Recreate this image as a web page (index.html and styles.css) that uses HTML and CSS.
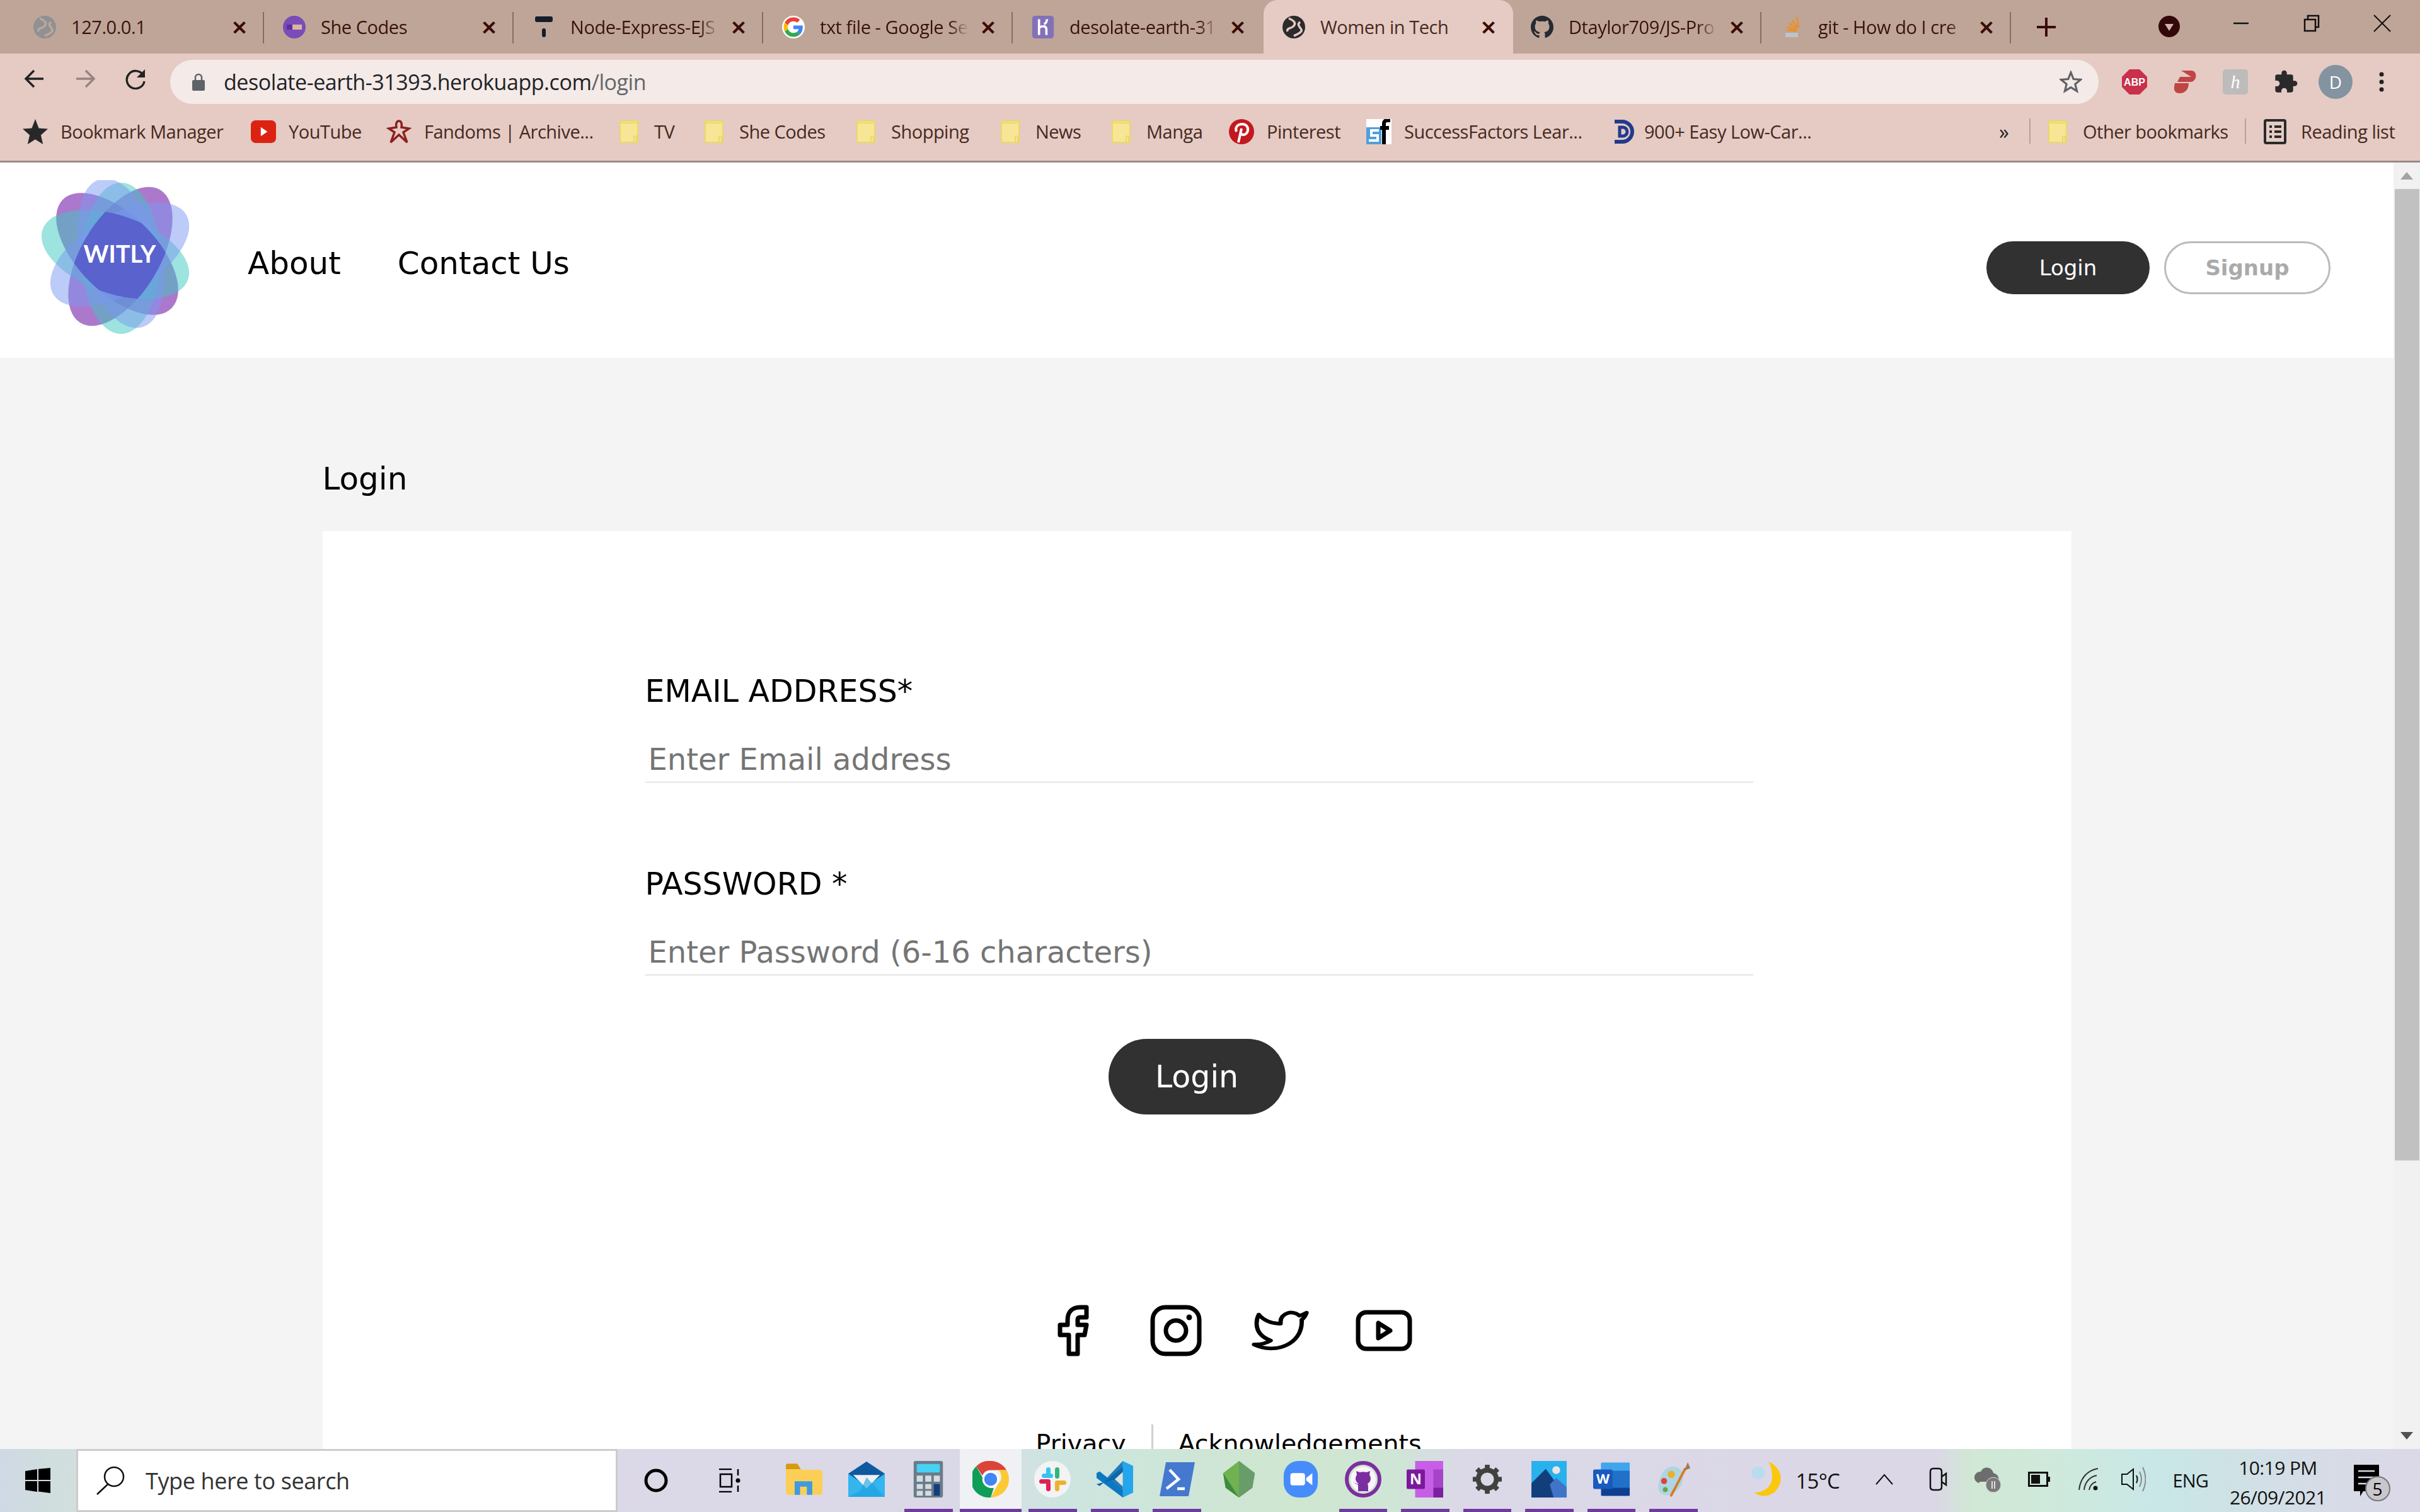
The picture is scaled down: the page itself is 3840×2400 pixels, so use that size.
FILE: index.html
```html
<!DOCTYPE html>
<html lang="en">
<head>
<meta charset="utf-8">
<title>Women in Tech</title>
<link rel="stylesheet" href="styles.css">
</head>
<body>
<div class="browser">
  <div class="tabstrip">
    <div class="tab">
      <svg class="fav" viewBox="0 0 36 36"><circle cx="18" cy="18" r="18" fill="#8f9192"/><path d="M10 4c8 4 12 7 8 12s-12 3-10 9M28 10c-6 4 0 8 2 12s-8 8-12 10" fill="none" stroke="#c0a699" stroke-width="3.5"/></svg>
      <span class="tab-title">127.0.0.1</span><span class="tab-x">✕</span>
    </div>
    <div class="tab">
      <svg class="fav" viewBox="0 0 36 36"><circle cx="18" cy="18" r="18" fill="#7a4cb8"/><rect x="6" y="14" width="24" height="8" fill="#d9b4a0"/><rect x="6" y="14" width="9" height="8" fill="#5b2f96"/></svg>
      <span class="tab-title">She Codes</span><span class="tab-x">✕</span>
    </div>
    <div class="tab">
      <svg class="fav" viewBox="0 0 36 36"><rect x="4" y="1" width="28" height="9" rx="3" fill="#141d2b"/><rect x="15" y="20" width="6" height="14" rx="3" fill="#141d2b"/></svg>
      <span class="tab-title fade">Node-Express-EJS</span><span class="tab-x">✕</span>
    </div>
    <div class="tab">
      <svg class="fav" viewBox="-4 -4 56 56"><circle cx="24" cy="24" r="28" fill="#fff"/><path fill="#EA4335" d="M24 9.5c3.54 0 6.71 1.22 9.21 3.6l6.85-6.85C35.9 2.38 30.47 0 24 0 14.62 0 6.51 5.38 2.56 13.22l7.98 6.19C12.43 13.72 17.74 9.5 24 9.5z"/><path fill="#4285F4" d="M46.98 24.55c0-1.57-.15-3.09-.38-4.55H24v9.02h12.94c-.58 2.96-2.26 5.48-4.78 7.18l7.73 6c4.51-4.18 7.09-10.36 7.09-17.65z"/><path fill="#FBBC05" d="M10.53 28.59c-.48-1.45-.76-2.99-.76-4.59s.27-3.14.76-4.59l-7.98-6.19C.92 16.46 0 20.12 0 24c0 3.88.92 7.54 2.56 10.78l7.97-6.19z"/><path fill="#34A853" d="M24 48c6.48 0 11.93-2.13 15.89-5.81l-7.73-6c-2.15 1.45-4.92 2.3-8.16 2.3-6.26 0-11.57-4.22-13.47-9.91l-7.98 6.19C6.51 42.62 14.62 48 24 48z"/></svg>
      <span class="tab-title fade">txt file - Google Se</span><span class="tab-x">✕</span>
    </div>
    <div class="tab no-sep">
      <svg class="fav" viewBox="0 0 38 40"><rect width="38" height="40" rx="5" fill="#8371b8"/><path d="M12 6v28M12 21c6-4 13-3 13 3v10M26 6c0 4-2 7-5 9" fill="none" stroke="#fff" stroke-width="4"/></svg>
      <span class="tab-title fade">desolate-earth-31</span><span class="tab-x">✕</span>
    </div>
    <div class="tab active">
      <svg class="fav" viewBox="0 0 36 36"><circle cx="18" cy="18" r="18" fill="#2b2b2b"/><path d="M10 4c8 4 12 7 8 12s-12 3-10 9M28 10c-6 4 0 8 2 12s-8 8-12 10" fill="none" stroke="#e5cbc4" stroke-width="3.5"/></svg>
      <span class="tab-title">Women in Tech</span><span class="tab-x">✕</span>
    </div>
    <div class="tab">
      <svg class="fav" viewBox="0 0 16 16"><path fill="#262b33" d="M8 0C3.58 0 0 3.58 0 8c0 3.54 2.29 6.53 5.47 7.59.4.07.55-.17.55-.38 0-.19-.01-.82-.01-1.49-2.01.37-2.53-.49-2.69-.94-.09-.23-.48-.94-.82-1.13-.28-.15-.68-.52-.01-.53.63-.01 1.08.58 1.23.82.72 1.21 1.87.87 2.33.66.07-.52.28-.87.51-1.07-1.78-.2-3.64-.89-3.64-3.95 0-.87.31-1.59.82-2.15-.08-.2-.36-1.02.08-2.12 0 0 .67-.21 2.2.82.64-.18 1.32-.27 2-.27.68 0 1.36.09 2 .27 1.53-1.04 2.2-.82 2.2-.82.44 1.1.16 1.92.08 2.12.51.56.82 1.27.82 2.15 0 3.07-1.87 3.75-3.65 3.95.29.25.54.73.54 1.48 0 1.07-.01 1.93-.01 2.2 0 .21.15.46.55.38A8.013 8.013 0 0016 8c0-4.42-3.58-8-8-8z"/></svg>
      <span class="tab-title fade">Dtaylor709/JS-Pro</span><span class="tab-x">✕</span>
    </div>
    <div class="tab">
      <svg class="fav" viewBox="0 0 36 36"><path d="M8 27h20v7H8z" fill="#bfc3c8"/><path d="M10 23l16 1M11 18l14 5M14 12l12 9M19 7l9 13M26 2l3 16" fill="none" stroke="#e8922e" stroke-width="3"/></svg>
      <span class="tab-title fade">git - How do I cre</span><span class="tab-x">✕</span>
    </div>
    <svg class="new-tab" viewBox="0 0 30 30"><path d="M15 0v30M0 15h30" stroke="#3b0a0a" stroke-width="4"/></svg>
    <div class="win-controls">
      <svg class="media" viewBox="0 0 34 34"><circle cx="17" cy="17" r="17" fill="#330808"/><path d="M10 13h14l-7 11z" fill="#cbb5ac"/></svg>
      <svg class="wc" viewBox="0 0 30 30"><path d="M3 15h24" stroke="#111" stroke-width="2.5"/></svg>
      <svg class="wc" viewBox="0 0 30 30"><path d="M4 9h17v18H4zM9 9V3h17v18h-5" fill="none" stroke="#111" stroke-width="2.5"/></svg>
      <svg class="wc" viewBox="0 0 30 30"><path d="M2 2l26 26M28 2L2 28" stroke="#111" stroke-width="2"/></svg>
    </div>
  </div>

  <div class="toolbar">
    <svg class="tool" viewBox="0 0 34 34"><path d="M31 17H4M16 4L3 17l13 13" fill="none" stroke="#222" stroke-width="3.4"/></svg>
    <svg class="tool" viewBox="0 0 34 34"><path d="M3 17h27M18 4l13 13-13 13" fill="none" stroke="#948580" stroke-width="3.4"/></svg>
    <svg class="tool" viewBox="0 0 34 34"><path d="M29 11a14 14 0 1 0 2 10" fill="none" stroke="#222" stroke-width="3.4"/><path d="M32 2v13H19z" fill="#222"/></svg>
    <div class="omnibox">
      <svg class="lock" viewBox="0 0 20 28"><path d="M5 12V7a5 5 0 0 1 10 0v5" fill="none" stroke="#5f6368" stroke-width="2.5"/><rect y="11" width="20" height="17" rx="2" fill="#5f6368"/></svg>
      <span class="url">desolate-earth-31393.herokuapp.com<span class="url-path">/login</span></span>
      <svg class="star" viewBox="0 0 36 36"><path d="M18 3l4.2 10.6 11.3.8-8.700 7.200 2.800 11L18 26.600 8.400 32.600l2.800-11-8.700-7.200 11.300-.8z" fill="none" stroke="#5f6368" stroke-width="3.2"/></svg>
    </div>
    <div class="ext-row">
      <svg class="ext" viewBox="0 0 40 40"><path d="M12 0h16l12 12v16L28 40H12L0 28V12z" fill="#c9304a"/><text x="20" y="26" class="abp">ABP</text></svg>
      <svg class="ext" viewBox="0 0 40 40"><path d="M14 2h16c10 0 10 16 0 18H8l4-8h18M4 22h22c0 10-6 16-14 16-8 0-11-4-8-16z" fill="#c04545"/></svg>
      <svg class="ext" viewBox="0 0 40 40"><rect width="40" height="40" rx="5" fill="#bebcbb"/><text x="20" y="30" class="hon">h</text></svg>
      <svg class="ext" viewBox="0 0 24 24"><path fill="#2a2a2a" d="M20.500 11H19V7a2 2 0 0 0-2-2h-4V3.500a2.500 2.500 0 0 0-5 0V5H4a2 2 0 0 0-2 2v3.800h1.500a2.700 2.700 0 0 1 0 5.400H2V20a2 2 0 0 0 2 2h3.800v-1.500a2.700 2.700 0 0 1 5.400 0V22H17a2 2 0 0 0 2-2v-4h1.500a2.500 2.500 0 0 0 0-5z"/></svg>
      <div class="avatar">D</div>
      <svg class="dots" viewBox="0 0 8 34"><circle cx="4" cy="5" r="3.500" fill="#222"/><circle cx="4" cy="17" r="3.500" fill="#222"/><circle cx="4" cy="29" r="3.500" fill="#222"/></svg>
    </div>
  </div>

  <div class="bookmarks">
    <div class="bm"><svg class="bm-ico" viewBox="0 0 36 36"><path d="M18 0l5 13 13 1-10 9 3 13-11-7-11 7 3-13L0 14l13-1z" fill="#282828"/></svg><span>Bookmark Manager</span></div>
    <div class="bm"><svg class="bm-ico" viewBox="0 0 38 36"><rect y="1" width="38" height="34" rx="7" fill="#dc2312"/><path d="M15 11l10 7-10 7z" fill="#fff"/></svg><span>YouTube</span></div>
    <div class="bm"><svg class="bm-ico" viewBox="0 0 40 40"><path d="M20 3c-4 0-5 5-4 10l-12 2 9 6-6 16 13-12 13 12-6-16 9-6-12-2c1-5 0-10-4-10z" fill="none" stroke="#8e2020" stroke-width="3.500"/></svg><span>Fandoms | Archive...</span></div>
    <div class="bm"><svg class="folder" viewBox="0 0 30 36"><use href="#ic-folder"/></svg><span>TV</span></div>
    <div class="bm"><svg class="folder" viewBox="0 0 30 36"><use href="#ic-folder"/></svg><span>She Codes</span></div>
    <div class="bm"><svg class="folder" viewBox="0 0 30 36"><use href="#ic-folder"/></svg><span>Shopping</span></div>
    <div class="bm"><svg class="folder" viewBox="0 0 30 36"><use href="#ic-folder"/></svg><span>News</span></div>
    <div class="bm"><svg class="folder" viewBox="0 0 30 36"><use href="#ic-folder"/></svg><span>Manga</span></div>
    <div class="bm"><svg class="bm-ico" viewBox="0 0 40 40"><circle cx="20" cy="20" r="20" fill="#c4171f"/><path d="M15 37l5-22M12 20c-3-8 3-12 9-12s10 4 9 10-7 9-11 5" fill="none" stroke="#fff" stroke-width="4"/></svg><span>Pinterest</span></div>
    <div class="bm"><svg class="bm-ico" viewBox="0 0 40 40"><rect width="40" height="40" fill="#fff"/><rect y="13" width="24" height="27" fill="#4f9ede"/><path d="M20 18H8v8h10v8H4" fill="none" stroke="#fff" stroke-width="4"/><path d="M38 2h-5c-3 0-5 2-5 5v33M22 14h14" fill="none" stroke="#000" stroke-width="6"/></svg><span>SuccessFactors Lear...</span></div>
    <div class="bm"><svg class="bm-ico bm-ico-tight" viewBox="0 0 36 40"><path d="M4 4h12a16 16 0 0 1 0 32H4" fill="none" stroke="#233a8c" stroke-width="6"/><path d="M12 13h5a7 7 0 0 1 0 14h-5z" fill="none" stroke="#233a8c" stroke-width="5"/></svg><span>900+ Easy Low-Car...</span></div>
    <span class="more">»</span>
    <div class="bm bm-sep"><svg class="folder" viewBox="0 0 30 36"><use href="#ic-folder"/></svg><span>Other bookmarks</span></div>
    <div class="bm bm-sep"><svg class="read-ico" viewBox="0 0 36 40"><rect x="2" y="2" width="32" height="36" rx="2" fill="none" stroke="#2a2a2a" stroke-width="4"/><path d="M9 12h4M17 12h11M9 20h4M17 20h11M9 28h4M17 28h11" stroke="#2a2a2a" stroke-width="4"/></svg><span>Reading list</span></div>
  </div>
  <svg class="sprite" width="0" height="0"><defs>
    <g id="ic-folder"><rect x="1" y="1" width="28" height="34" fill="#f7e695" stroke="#ecd867" stroke-width="2"/><path d="M1 4h28" stroke="#ecd867" stroke-width="2"/><path d="M23 35v-8a2 2 0 0 1 4 0v8" fill="none" stroke="#ecd867" stroke-width="2"/></g>
  </defs></svg>

  <div class="viewport">
    <div class="site">
      <header class="site-header">
        <a class="logo">
          <svg class="logo-svg" viewBox="66 286 235 246">
            <defs>
              <clipPath id="clip-t1"><ellipse cx="183" cy="404" rx="62" ry="122" transform="rotate(-71 183 404)"/></clipPath>
              <clipPath id="clip-p1"><ellipse cx="186" cy="403" rx="62" ry="122" transform="rotate(-45 186 403)"/></clipPath>
            </defs>
            <g class="petals-purple"><ellipse cx="186" cy="403" rx="62" ry="122" transform="rotate(-45 186 403)"/><ellipse cx="191" cy="407" rx="62" ry="123" transform="rotate(31 191 407)"/></g>
            <g class="petals-teal"><ellipse cx="183" cy="404" rx="62" ry="122" transform="rotate(-71 183 404)"/><ellipse cx="192" cy="410" rx="62" ry="120"/></g>
            <g class="petals-blue"><ellipse cx="192" cy="402" rx="62" ry="122" transform="rotate(-16 192 402)"/><ellipse cx="190" cy="404" rx="62" ry="123" transform="rotate(59 190 404)"/></g>
            <g clip-path="url(#clip-t1)"><g clip-path="url(#clip-p1)"><ellipse class="petal-core" cx="191" cy="407" rx="62" ry="123" transform="rotate(31 191 407)"/></g></g>
            <text x="190" y="417" class="logo-text">WITLY</text>
          </svg>
        </a>
        <nav class="site-nav"><a>About</a><a>Contact Us</a></nav>
        <div class="auth"><a class="pill pill-dark">Login</a><a class="pill pill-outline">Signup</a></div>
      </header>
      <main class="content">
        <h1 class="page-title">Login</h1>
        <section class="card">
          <form class="login-form">
            <label class="field-label">EMAIL ADDRESS*</label>
            <input class="field-input" type="email" placeholder="Enter Email address">
            <label class="field-label second">PASSWORD *</label>
            <input class="field-input" type="password" placeholder="Enter Password (6-16 characters)">
            <button class="submit" type="button">Login</button>
          </form>
          <footer class="card-footer">
            <div class="socials">
              <svg class="s-fb" viewBox="0 0 50 82"><path d="M46 4H36C23 4 16 12 16 24v8H4v16h14v30h14V48h11l3-16H32v-8q0-4 4-4h10z" fill="none" stroke="#000" stroke-width="7" stroke-linejoin="round"/></svg>
              <svg class="s-ig" viewBox="0 0 82 82"><rect x="4" y="4" width="74" height="74" rx="20" fill="none" stroke="#000" stroke-width="7"/><circle cx="41" cy="41" r="16" fill="none" stroke="#000" stroke-width="7"/><circle cx="62" cy="20" r="4.500" fill="#000"/></svg>
              <svg class="s-tw" viewBox="0 0 24 24" preserveAspectRatio="none"><path d="M23 3a10.900 10.900 0 0 1-3 1.530 4.480 4.480 0 0 0-7.860 3v1A10.660 10.660 0 0 1 3 4s-4 9 5 13a11.640 11.640 0 0 1-7 2c9 5 20 0 20-11.500a4.500 4.500 0 0 0-.08-.83A7.720 7.720 0 0 0 23 3z" fill="none" stroke="#000" stroke-width="1.800" stroke-linejoin="round"/></svg>
              <svg class="s-yt" viewBox="0 0 90 66"><rect x="4" y="4" width="82" height="58" rx="13" fill="none" stroke="#000" stroke-width="7"/><path d="M36 21v24l19-12z" fill="none" stroke="#000" stroke-width="7" stroke-linejoin="round"/></svg>
            </div>
            <div class="legal"><a>Privacy</a><a class="legal-last">Acknowledgements</a></div>
          </footer>
        </section>
      </main>
    </div>
    <div class="scrollbar">
      <div class="sb-btn"><span class="tri-up"></span></div>
      <div class="sb-thumb"></div>
      <div class="sb-track"></div>
      <div class="sb-btn"><span class="tri-down"></span></div>
    </div>
  </div>
</div>

<div class="taskbar">
  <svg class="start" viewBox="0 0 40 40"><path d="M0 5l19-3v17H0zM21 1.700L40 0v19H21zM0 21h19v17L0 35zM21 21h19v19l-19-2.500z" fill="#000"/></svg>
  <div class="search">
    <svg class="search-ico" viewBox="0 0 48 48"><circle cx="30" cy="18" r="15" fill="none" stroke="#111" stroke-width="2.500"/><path d="M20 30L3 46" stroke="#111" stroke-width="2.500"/></svg>
    <span>Type here to search</span>
  </div>
  <svg class="cortana" viewBox="0 0 40 40"><circle cx="20" cy="20" r="16" fill="none" stroke="#000" stroke-width="5"/></svg>
  <svg class="taskview" viewBox="0 0 38 38"><path d="M0 1h20M0 37h20M2 9h18v20H2zM0 13" fill="none" stroke="#000" stroke-width="2.500"/><path d="M30 1v10M30 27v10" stroke="#000" stroke-width="2.500"/><circle cx="30" cy="19" r="3.500" fill="#000"/></svg>
  <div class="apps">
    <div class="app"><svg class="app-ico" viewBox="0 0 54 46"><path d="M0 6a4 4 0 0 1 4-4h14l5 7h27a4 4 0 0 1 4 4v29a4 4 0 0 1-4 4H4a4 4 0 0 1-4-4z" fill="#fbcf57"/><path d="M0 3a3 3 0 0 1 3-3h14l5 8H0z" fill="#d69a0e"/><path d="M13 46V26h26v20h-8V34H21v12z" fill="#3f9ae0"/></svg></div>
    <div class="app"><svg class="app-ico" viewBox="0 0 60 58"><path d="M0 20L30 0l30 20v38H0z" fill="#33b5ee"/><path d="M0 20L30 0l30 20-30 20z" fill="#0f5a9f"/><path d="M8 22h44L30 44z" fill="#eef2f4"/><path d="M30 26L60 58H0l20-10z" fill="#1b9fe0" opacity=".6"/></svg></div>
    <div class="app running"><svg class="app-ico" viewBox="0 0 48 60"><rect width="48" height="60" rx="3" fill="#6b7b88"/><rect x="5" y="5" width="38" height="14" rx="2" fill="#46d2f5"/><g fill="#d5dce1"><rect x="5" y="24" width="10" height="10"/><rect x="19" y="24" width="10" height="10"/><rect x="33" y="24" width="10" height="10"/><rect x="5" y="38" width="10" height="8"/><rect x="19" y="38" width="10" height="8"/><rect x="5" y="49" width="10" height="8"/><rect x="19" y="49" width="10" height="8"/></g><rect x="33" y="38" width="10" height="19" fill="#123f7c"/></svg></div>
    <div class="app running current"><svg class="app-ico" viewBox="0 0 48 48"><path d="M24 0a24 24 0 0 1 20.800 12H24a12 12 0 0 0-11 7L5 7A24 24 0 0 1 24 0z" fill="#db4437"/><path d="M44.800 12A24 24 0 0 1 24 48l10-18a12 12 0 0 0 0-18z" fill="#fcc934"/><path d="M5 7l9 16a12 12 0 0 0 14 12.500L24 48A24 24 0 0 1 5 7z" fill="#109d58"/><circle cx="24" cy="24" r="11" fill="#fff"/><circle cx="24" cy="24" r="8.500" fill="#4285f4"/></svg></div>
    <div class="app running"><svg class="app-ico" viewBox="0 0 58 58"><circle cx="29" cy="29" r="29" fill="#f4f3f4"/><rect x="12" y="20" width="18" height="7" rx="3.500" fill="#36c5f0"/><rect x="19" y="10" width="7" height="14" rx="3.500" fill="#36c5f0"/><rect x="33" y="10" width="7" height="18" rx="3.500" fill="#2eb67d"/><rect x="33" y="31" width="18" height="7" rx="3.500" fill="#ecb22e"/><rect x="33" y="33" width="7" height="15" rx="3.500" fill="#ecb22e"/><rect x="8" y="29" width="18" height="7" rx="3.500" fill="#e01e5a"/><rect x="19" y="33" width="7" height="15" rx="3.500" fill="#e01e5a"/></svg></div>
    <div class="app running"><svg class="app-ico" viewBox="0 0 60 60"><path d="M43 0l17 8v44l-17 8z" fill="#23a6ec"/><path d="M43 0v60L13 32z" fill="#0f6fb8" opacity=".9"/><path d="M0 20l5-3 38 31v12L0 28z" fill="#0b79c2"/><path d="M0 38l5 3 38-31V22L32 30z" fill="#0e66aa"/><path d="M30 30L43 18v24z" fill="#dbe4d9"/></svg></div>
    <div class="app running"><svg class="app-ico" viewBox="0 0 58 58"><path d="M12 2h46l-10 54H2z" fill="#4479cf"/><path d="M18 14l14 15-19 15M30 44h12" fill="none" stroke="#fff" stroke-width="4.500"/></svg></div>
    <div class="app"><svg class="app-ico" viewBox="0 0 52 60"><path d="M26 0l26 20-4 24-22 16L4 44 0 20z" fill="#6fb24f"/><path d="M26 0l26 20-4 24-22 16z" fill="#689d6a"/><path d="M0 20l26 40-22-16z" fill="#3f8a3f"/></svg></div>
    <div class="app"><svg class="app-ico" viewBox="0 0 56 60"><rect width="56" height="60" rx="24" fill="#468cfb"/><rect x="11" y="20" width="24" height="20" rx="4" fill="#fff"/><path d="M37 28l10-8v20l-10-8z" fill="#fff"/></svg></div>
    <div class="app running"><svg class="app-ico" viewBox="0 0 58 58"><circle cx="29" cy="29" r="26" fill="none" stroke="#7b2f9e" stroke-width="6"/><circle cx="29" cy="29" r="20" fill="#fbf5fb"/><path d="M21 48V38l-8-4c6 2 8 3 9 2-6-3-6-10-3-14l-1-6 6 2c3-1 7-1 10 0l6-2-1 6c3 4 3 11-3 14 1 2 1 4 1 12z" fill="#7b2f9e"/></svg></div>
    <div class="app running"><svg class="app-ico" viewBox="0 0 60 60"><rect x="14" width="46" height="60" fill="#c75fe6"/><rect x="44" y="14" width="16" height="46" fill="#a644c8"/><rect x="44" y="44" width="16" height="16" fill="#7c1fa0"/><rect y="14" width="30" height="32" rx="2" fill="#7a1a9a"/><text x="15" y="38" class="app-letter">N</text></svg></div>
    <div class="app running"><svg class="app-ico-sm" viewBox="0 0 48 48"><g fill="none" stroke="#3f433f"><circle cx="24" cy="24" r="15" stroke-width="8"/><path d="M24 0v48M0 24h48M7 7l34 34M41 7L7 41" stroke-width="8" stroke-dasharray="8 32 8"/></g></svg></div>
    <div class="app running"><svg class="app-ico" viewBox="0 0 54 56"><rect width="54" height="56" fill="#29b1ec"/><circle cx="38" cy="14" r="6" fill="#e9e6e6"/><path d="M0 56V34L22 12l32 44z" fill="#123f7c"/><path d="M28 36l10-10 16 14v16H34z" fill="#3f74c9"/></svg></div>
    <div class="app running"><svg class="app-ico" viewBox="0 0 64 58"><rect x="14" width="50" height="58" rx="2" fill="#2171c9"/><rect x="14" width="50" height="14" fill="#41a5ee"/><rect x="14" y="44" width="50" height="14" fill="#103f91"/><rect y="12" width="34" height="34" rx="3" fill="#185abd"/><text x="17" y="37" class="app-letter">W</text></svg></div>
    <div class="app running"><svg class="app-ico" viewBox="0 0 60 60"><path d="M24 10c14-3 24 6 22 20-2 16-18 28-30 26C4 53 4 42 8 30c3-10 8-18 16-20z" fill="#aed5e3"/><circle cx="27" cy="22" r="6" fill="#e8b12a"/><circle cx="15" cy="33" r="5" fill="#d9453d"/><circle cx="17" cy="47" r="4" fill="#6ca34a"/><path d="M26 58L50 12" stroke="#d97a1f" stroke-width="4"/><path d="M48 16l6-14 4 10z" fill="#a6794f"/></svg></div>
  </div>
  <div class="tray">
    <svg class="moon" viewBox="0 0 50 56"><path d="M28 0c20 8 26 30 12 46-9 10-24 11-35 3 16 0 28-8 29-24 0-10-2-18-6-25z" fill="#fcc70c"/><ellipse cx="12" cy="18" rx="11" ry="10" fill="#b9dcee"/></svg>
    <span class="temp">15°C</span>
    <svg class="tray-ico caret" viewBox="0 0 30 20"><path d="M2 18L15 3l13 15" fill="none" stroke="#111" stroke-width="2"/></svg>
    <svg class="tray-ico meet" viewBox="0 0 30 44"><path d="M3 10q0-5 5-5h8q5 0 5 5v24q0 5-5 5H8q-5 0-5-5zM21 18l7-5v18l-7-5" fill="none" stroke="#111" stroke-width="2.500"/></svg>
    <svg class="tray-ico cloud" viewBox="0 0 42 44"><path d="M8 28a9 9 0 0 1 2-18c4-10 18-8 20 2 6 2 10 6 8 14H8z" fill="#6d6d6d"/><circle cx="30" cy="31" r="12" fill="#7a7a7a" stroke="#dbd7e6" stroke-width="1"/><path d="M28 25v12M32 25v12" stroke="#fff" stroke-width="1.500"/></svg>
    <svg class="tray-ico batt" viewBox="0 0 36 24"><rect x="1.500" y="1.500" width="29" height="21" fill="none" stroke="#111" stroke-width="3"/><rect x="5" y="5" width="14" height="14" fill="#111"/><rect x="32" y="8" width="3" height="8" fill="#111"/></svg>
    <svg class="tray-ico wifi" viewBox="0 0 32 36"><path d="M1 35C3 16 14 4 31 1M9 35c1-12 9-21 20-23M17 35c1-6 5-11 11-13" fill="none" stroke="#333" stroke-width="2"/><circle cx="27" cy="32" r="3.500" fill="#111"/></svg>
    <svg class="tray-ico vol" viewBox="0 0 40 44"><path d="M2 14h8l10-8v32l-10-8H2z" fill="none" stroke="#111" stroke-width="2"/><path d="M25 16q3 6 0 12" fill="none" stroke="#111" stroke-width="2"/><path d="M30 10q6 12 0 24M35 3q9 19 0 38" fill="none" stroke="#889" stroke-width="2"/></svg>
    <span class="lang">ENG</span>
    <div class="clock"><span>10:19 PM</span><span>26/09/2021</span></div>
    <div class="notif"><svg class="notif-ico" viewBox="0 0 40 50"><path d="M0 0h40v42H15l-5 8v-8H0z" fill="#000"/><path d="M7 10h26M7 20h26M7 30h26" stroke="#dbd7e6" stroke-width="2.500"/></svg><span class="badge">5</span></div>
  </div>
</div>
</body>
</html>
```
FILE: styles.css
```css
* { box-sizing: border-box; }
html, body { margin: 0; padding: 0; }
body {
  width: 3840px;
  height: 2400px;
  overflow: hidden;
  display: flex;
  flex-direction: column;
  font-family: "Open Sans", "Noto Sans", sans-serif;
  color: #000;
  background: #fff;
}
.browser { flex: 1; min-height: 0; display: flex; flex-direction: column; }

/* tab strip */
.tabstrip {
  height: 85px;
  flex: none;
  background: #bfa598;
  display: flex;
  align-items: stretch;
  padding-left: 23px;
}
.tab {
  width: 396px;
  flex: none;
  position: relative;
  display: flex;
  align-items: center;
  padding: 0 28px 0 30px;
  color: #3a120c;
  font-size: 29px;
  letter-spacing: -0.45px;
}
.tab::after {
  content: "";
  position: absolute;
  right: 0;
  top: 19px;
  height: 50px;
  width: 2px;
  background: #8a6a60;
}
.tab.no-sep::after, .tab.active::after { display: none; }
.tab.active {
  background: #e5cbc4;
  border-radius: 22px 22px 0 0;
  color: #4a2a22;
  margin: 0 -2px 0 2px;
}
.fav { width: 36px; height: 36px; flex: none; margin-right: 24px; }
.tab-title { flex: 1; min-width: 0; white-space: nowrap; }
.tab-title.fade {
  -webkit-mask-image: linear-gradient(to right, #000 205px, transparent 236px);
  mask-image: linear-gradient(to right, #000 205px, transparent 236px);
}
.tab-x { width: 24px; text-align: center; font-size: 31px; font-weight: 600; color: #3a0b06; flex: none; }
.new-tab { width: 30px; height: 30px; margin: 28px 0 0 41px; flex: none; }
.win-controls { display: flex; align-items: flex-start; margin-left: 163px; }
.media { width: 34px; height: 34px; margin-top: 25px; }
.wc { width: 30px; height: 30px; margin: 22px 0 0 82px; }

/* toolbar */
.toolbar {
  height: 80px;
  flex: none;
  background: #e5cbc4;
  display: flex;
  align-items: center;
  padding-left: 38px;
  gap: 46px;
}
.tool { width: 34px; height: 34px; flex: none; }
.omnibox {
  width: 3060px;
  height: 70px;
  margin: 10px 0 0 -8px;
  background: #f4eae7;
  border-radius: 35px;
  display: flex;
  align-items: center;
  padding: 0 26px 0 35px;
  flex: none;
}
.lock { width: 20px; height: 28px; margin-right: 30px; flex: none; }
.url { flex: 1; font-size: 34px; color: #1f2327; letter-spacing: -0.45px; }
.url-path { color: #62666b; }
.star { width: 36px; height: 36px; flex: none; }
.ext-row { display: flex; align-items: center; margin: 10px 0 0 -9px; }
.ext { width: 40px; height: 40px; flex: none; margin-right: 40px; }
.abp { font: bold 16px "Liberation Sans", sans-serif; fill: #fff; text-anchor: middle; }
.hon { font: italic 30px "Liberation Serif", serif; fill: #fff; text-anchor: middle; }
.avatar {
  width: 54px;
  height: 54px;
  border-radius: 50%;
  background: #83939f;
  color: #fff;
  font-size: 28px;
  display: flex;
  align-items: center;
  justify-content: center;
  margin-left: -8px;
}
.dots { width: 8px; height: 34px; margin-left: 42px; }

/* bookmarks */
.bookmarks {
  height: 93px;
  flex: none;
  background: #e5cbc4;
  border-bottom: 3px solid #9b8b85;
  display: grid;
  grid-template-columns: 362px 215px 370px 135px 241px 229px 176px 186px 218px 388px 616px 78px 342px 1fr;
  align-items: center;
  padding: 0 0 3px 36px;
  font-size: 29px;
  color: #452920;
  letter-spacing: -0.5px;
}
.bm { display: flex; align-items: center; white-space: nowrap; position: relative; }
.bm-ico { width: 40px; height: 40px; flex: none; margin-right: 20px; }
.bm-ico-tight { margin-right: 13px; }
.folder { width: 30px; height: 36px; flex: none; margin-right: 25px; }
.read-ico { width: 36px; height: 40px; flex: none; margin-right: 23px; }
.more { font-size: 32px; color: #222; }
.bm-sep::before {
  content: "";
  position: absolute;
  left: -30px;
  top: -1px;
  height: 40px;
  width: 2px;
  background: #b7a19a;
}
.sprite { position: absolute; }

/* page */
.viewport { flex: 1; min-height: 0; display: flex; overflow: hidden; }
.site { flex: 1; min-width: 0; background: #f4f4f4; overflow: hidden; }
.site-header {
  height: 310px;
  background: #fff;
  display: flex;
  align-items: center;
  padding: 0 100px 0 66px;
  font-family: "DejaVu Sans", sans-serif;
}
.logo { display: block; width: 235px; height: 246px; flex: none; margin-top: -8px; }
.logo-svg { width: 100%; height: 100%; display: block; }
.petals-purple { fill: #751eaa; fill-opacity: .6; }
.petals-teal { fill: #3cc8c0; fill-opacity: .5; }
.petals-blue { fill: #7a98f0; fill-opacity: .5; }
.petal-core { fill: #5962cd; }
.logo-text { font: bold 38px Lato, sans-serif; fill: #fff; text-anchor: middle; }
.site-nav { display: flex; gap: 90px; margin: 9px 0 0 92px; font-size: 50px; }
.auth { margin-left: auto; display: flex; gap: 23px; margin-top: 24px; }
.pill {
  height: 84px;
  border-radius: 42px;
  display: flex;
  align-items: center;
  justify-content: center;
  font-size: 34px;
}
.pill-dark { width: 259px; background: #313131; color: #fff; }
.pill-outline { width: 264px; border: 3px solid #bbb; color: #aaa; font-weight: bold; background: #fff; }

.content {
  width: 2775px;
  margin: 0 auto;
  font-family: "DejaVu Sans", sans-serif;
}
.page-title { margin: 0; padding-top: 162px; height: 275px; font-size: 50px; line-height: 60px; font-weight: normal; }
.card { background: #fff; padding: 225px 0 0 512px; min-height: 1400px; }
.login-form { width: 1758px; display: flex; flex-direction: column; }
.field-label { font-size: 49px; line-height: 60px; display: block; }
.field-label.second { margin-top: 131px; }
.field-input {
  display: block;
  width: 100%;
  height: 84px;
  margin-top: 31px;
  padding: 10px 5px 0;
  border: 0;
  border-bottom: 3px solid #ececec;
  outline: 0;
  background: transparent;
  font: 48px "DejaVu Sans", sans-serif;
}
.field-input::placeholder { color: #757575; opacity: 1; }
.submit {
  width: 281px;
  height: 120px;
  border-radius: 60px;
  border: 0;
  background: #313131;
  color: #fff;
  font: 49px "DejaVu Sans", sans-serif;
  align-self: flex-start;
  margin: 100px 0 0 735px;
}
.card-footer { margin: 302px 0 0 0; padding-left: 654px; width: 1900px; }
.socials { display: flex; align-items: center; width: 563px; height: 82px; }
.s-fb { width: 50px; height: 82px; margin-right: 97px; flex: none; }
.s-ig { width: 82px; height: 82px; margin-right: 79px; flex: none; }
.s-tw { width: 91px; height: 76px; margin-right: 74px; flex: none; }
.s-yt { width: 90px; height: 66px; flex: none; }
.legal { display: flex; margin: 108px 0 0 -34px; font-size: 39.5px; line-height: 60px; white-space: nowrap; }
.legal a { padding-right: 40px; border-right: 3px solid #d0d0d0; }
.legal .legal-last { padding: 0 0 0 40px; border: 0; }

.scrollbar { width: 42px; flex: none; background: #f1f1f1; display: flex; flex-direction: column; }
.sb-btn { height: 42px; display: flex; align-items: center; justify-content: center; flex: none; }
.sb-thumb { height: 1542px; background: #c1c1c1; margin: 0 1px 0 2px; flex: none; }
.sb-track { flex: 1; }
.tri-up { width: 0; height: 0; border: 10px solid transparent; border-top: 0; border-bottom: 12px solid #a3a3a3; }
.tri-down { width: 0; height: 0; border: 10px solid transparent; border-bottom: 0; border-top: 12px solid #505050; }

/* taskbar */
.taskbar {
  height: 100px;
  flex: none;
  display: flex;
  align-items: center;
  background: linear-gradient(to right, #cfd8e4 0, #d0dfdd 90px, #dcd8e8 400px, #dbd8e7 1500px, #cde5e0 1680px, #cfe6d0 2050px, #cfe5d6 2220px, #dbd8e7 2320px, #dbd7e6 3070px, #d0e8d4 3130px, #cfe9dc 3260px, #c8e7e6 3420px, #d6dce6 3680px, #dcd8e8 3840px);
  color: #111;
}
.start { width: 40px; height: 40px; margin-left: 40px; flex: none; }
.search {
  width: 859px;
  height: 100px;
  margin-left: 41px;
  background: #fff;
  border: 3px solid #ccc;
  display: flex;
  align-items: center;
  padding-left: 27px;
  font-size: 36px;
  color: #333;
  letter-spacing: -0.4px;
  flex: none;
}
.search-ico { width: 48px; height: 48px; margin-right: 32px; flex: none; }
.cortana { width: 40px; height: 40px; margin-left: 41px; flex: none; }
.taskview { width: 38px; height: 38px; margin-left: 80px; flex: none; }
.apps { display: flex; margin-left: 48px; height: 100px; flex: none; }
.app {
  width: 98.500px;
  height: 100px;
  display: flex;
  align-items: center;
  justify-content: center;
  position: relative;
  flex: none;
}
.app.running::after {
  content: "";
  position: absolute;
  left: 11px;
  right: 11px;
  bottom: 0;
  height: 5px;
  background: #6f3a9e;
}
.app.current { background: #eff1f5; }
.app.current::after { left: 0; right: 0; }
.app-ico { width: 58px; height: 58px; margin-top: -4px; }
.app-ico-sm { width: 46px; height: 46px; margin-top: -4px; }
.app-letter { font: bold 24px "Open Sans", sans-serif; fill: #fff; text-anchor: middle; }

.tray { display: flex; align-items: center; height: 100px; margin-left: 73px; flex: 1; font-size: 33px; }
.moon { width: 50px; height: 56px; flex: none; margin-top: -4px; }
.temp { margin-left: 22px; width: 100px; margin-top: 0; letter-spacing: -0.8px; }
.tray-ico { flex: none; margin-top: -4px; }
.caret { width: 30px; height: 20px; margin-left: 25px; }
.meet { width: 30px; height: 44px; margin-left: 55px; }
.cloud { width: 42px; height: 44px; margin-left: 43px; }
.batt { width: 36px; height: 24px; margin-left: 43px; }
.wifi { width: 32px; height: 36px; margin-left: 44px; }
.vol { width: 40px; height: 44px; margin-left: 35px; }
.lang { margin-left: 43px; font-size: 29px; letter-spacing: -0.8px; width: 90px; margin-top: -2px; }
.clock { display: flex; flex-direction: column; align-items: center; width: 150px; margin-left: 2px; font-size: 30px; line-height: 47px; letter-spacing: -0.6px; margin-top: 6px; }
.notif { position: relative; width: 60px; height: 70px; margin-left: 45px; }
.notif-ico { width: 40px; height: 50px; position: absolute; left: 0; top: 10px; }
.badge {
  position: absolute;
  left: 18px;
  top: 28px;
  width: 40px;
  height: 40px;
  border-radius: 50%;
  background: #c9c7ce;
  border: 2px solid #777;
  color: #000;
  font-size: 28px;
  display: flex;
  align-items: center;
  justify-content: center;
}
```
